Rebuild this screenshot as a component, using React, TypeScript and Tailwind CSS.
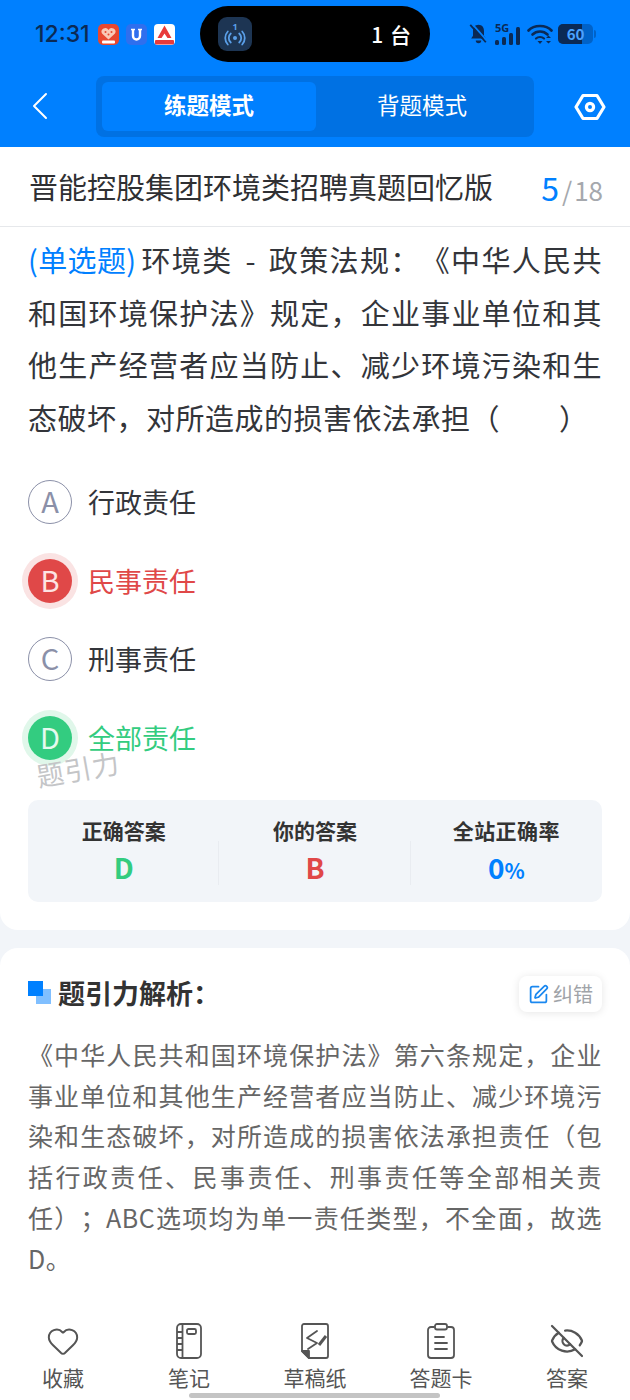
import { Heart, SquarePen, EyeOff } from "lucide-react";

const fontStack = "font-['Noto_Sans_CJK_SC','Noto_Sans',sans-serif]";

const options = [
  { key: "A", text: "行政责任", state: "idle" },
  { key: "B", text: "民事责任", state: "wrong" },
  { key: "C", text: "刑事责任", state: "idle" },
  { key: "D", text: "全部责任", state: "right" },
];

function StatusIcons() {
  return (
    <div className="flex items-center">
      {/* muted bell */}
      <svg width="21" height="22" viewBox="0 0 22 24" className="text-[#0b2a55]">
        <path d="M11 2c4 0 6 3 6 7v5l2 3H3l2-3V9c0-4 2-7 6-7z" fill="currentColor" />
        <path d="M8 19h6a3 3 0 0 1-6 0z" fill="currentColor" />
        <path d="M4 1l17 19" stroke="#0080FF" strokeWidth="2" />
        <path d="M2 2l17 19" stroke="currentColor" strokeWidth="2" />
      </svg>
      <svg width="25" height="24" viewBox="0 0 25 24" className="ml-[6px] text-[#0b2a55]">
        <text x="0" y="9.500" fontSize="11" fontWeight="700" fill="currentColor" fontFamily="Noto Sans">5G</text>
        <rect x="0" y="18" width="4" height="5" rx="1.500" fill="currentColor" />
        <rect x="7" y="15" width="4" height="8" rx="1.500" fill="currentColor" />
        <rect x="14" y="11" width="4" height="12" rx="1.500" fill="currentColor" />
        <rect x="21" y="5" width="4" height="18" rx="1.500" fill="currentColor" />
      </svg>
      <svg width="26" height="22" viewBox="0 0 26 22" className="ml-[7px] text-[#0b2a55]" fill="none" stroke="currentColor" strokeWidth="2.600" strokeLinecap="round">
        <path d="M1.500 7.500C7 1.500 19 1.500 24.500 7.500" />
        <path d="M5.500 11.500c4-4 11-4 15 0" />
        <path d="M9 15.500c2.200-2 5.800-2 8 0" strokeWidth="2.200" />
        <path d="M19 15l2.500-2.600 2.500 2.600zM19 18l2.500 2.600 2.500-2.600z" fill="currentColor" stroke="none" />
        <path d="M10.500 18h5l-2.500 3z" fill="currentColor" stroke="none" />
      </svg>
      {/* battery */}
      <div className="ml-[5px] h-[20px] w-[35px] rounded-[5px] bg-[#0062c8] relative">
        <div className="h-full w-[24px] bg-[#0b2a55] rounded-l-[5px]" />
        <span className="absolute inset-0 flex items-center justify-center text-[15px] font-semibold text-[#4aa3ff] leading-[20px]">60</span>
      </div>
      <div className="ml-px h-[8px] w-[2px] rounded-r-sm bg-[#0062c8]" />
    </div>
  );
}

function AppIcons() {
  return (
    <div className="flex items-center gap-[7px] ml-[8px]">
      <svg width="21" height="21" viewBox="0 0 21 21">
        <rect width="21" height="21" rx="5" fill="#e8472f" />
        <path d="M10.500 15.500L4 9.500a3.600 3.600 0 0 1 6.500-3.500 3.600 3.600 0 0 1 6.500 3.500z" fill="#f9c8b5" />
        <circle cx="7.500" cy="8" r="1" fill="#e8472f" />
        <circle cx="10.500" cy="10.500" r="1" fill="#e8472f" />
        <circle cx="13.500" cy="8" r="1" fill="#e8472f" />
        <rect x="4" y="16.500" width="13" height="3" rx="1" fill="#fff" />
      </svg>
      <svg width="21" height="21" viewBox="0 0 21 21">
        <rect width="21" height="21" rx="5" fill="#2f6fee" />
        <path d="M7 6v6a3.500 3.500 0 0 0 7 0V6" fill="none" stroke="#fff" strokeWidth="2.400" />
        <path d="M5 5.500h4M12 5.500h4" stroke="#fff" strokeWidth="1.500" />
      </svg>
      <svg width="21" height="21" viewBox="0 0 21 21">
        <rect width="21" height="21" rx="4" fill="#fff" />
        <path d="M10.500 1.500L3.500 14h4l3-4.500 3 4.500h4z" fill="#e83a3a" />
        <rect x="1" y="16" width="19" height="4.500" rx="1" fill="#e83a3a" />
      </svg>
    </div>
  );
}

function Island() {
  return (
    <div className="w-[230px] h-[56px] rounded-full bg-black flex items-center justify-between pl-[18px] pr-[18px]">
      <div className="w-[34px] h-[34px] rounded-[9px] bg-[#1d3553] flex items-center justify-center">
        <svg width="28" height="28" viewBox="0 0 28 28" fill="none" stroke="#5a9fe8" strokeWidth="1.800" strokeLinecap="round">
          <text x="14" y="10" textAnchor="middle" fontSize="9" fontWeight="700" fill="#5a9fe8" stroke="none" fontFamily="Noto Sans">1</text>
          <circle cx="14" cy="18" r="2" fill="#5a9fe8" stroke="none" />
          <path d="M9.800 13.500a6 6 0 0 0 0 9M18.200 13.500a6 6 0 0 1 0 9" />
          <path d="M6.800 11.500a9.500 9.500 0 0 0 0 13M21.200 11.500a9.500 9.500 0 0 1 0 13" />
        </svg>
      </div>
      <span className="text-[21px] font-medium text-white leading-none tracking-[1px]">1 台</span>
    </div>
  );
}

function Header() {
  return (
    <header className="bg-[#0080ff] h-[147px] shrink-0">
      <div className="flex items-center h-[68px] pl-[35px] pr-[34px]">
        <div className="w-[165px] flex items-center">
          <span className="text-[23px] font-medium text-[#0b2a55] leading-none font-['Inter',sans-serif]">12:31</span>
          <AppIcons />
        </div>
        <Island />
        <div className="flex-1 flex justify-end">
          <StatusIcons />
        </div>
      </div>
      <div className="flex items-center h-[61px] mt-[8px] pl-[31px] pr-[24px]">
        <svg width="18" height="28" viewBox="0 0 18 28" fill="none" stroke="#fff" strokeWidth="2" strokeLinecap="round" strokeLinejoin="round" className="-mt-[2px]">
          <path d="M15 2L3 14l12 12" />
        </svg>
        <div className="ml-[47px] w-[438px] h-[61px] rounded-[8px] bg-[#0071e3] p-[6px] flex">
          <div className="w-[214px] pb-[4px] rounded-[6px] bg-[#0080ff] flex items-center justify-center text-[22.500px] font-bold text-white">练题模式</div>
          <div className="flex-1 pb-[4px] flex items-center justify-center text-[22.500px] text-white">背题模式</div>
        </div>
        <div className="ml-auto">
          <svg width="32" height="28" viewBox="0 0 32 28" fill="none" stroke="#fff" strokeWidth="3.200" strokeLinejoin="round">
            <path d="M9 2.500h14L30 14l-7 11.500H9L2 14z" />
            <circle cx="16" cy="14" r="3.600" />
          </svg>
        </div>
      </div>
    </header>
  );
}

function Question() {
  return (
    <section className="bg-white rounded-b-[18px] h-[783px] shrink-0">
      <div className="h-[80px] border-b border-[#e6e8eb] flex items-center justify-between pl-[29px] pr-[27px]">
        <h1 className="text-[29px] text-[#2f3033] font-normal leading-none">晋能控股集团环境类招聘真题回忆版</h1>
        <div className="flex items-baseline leading-none">
          <span className="text-[32px] text-[#0080ff]">5</span>
          <span className="text-[26px] text-[#a5a8ad] ml-[3px]">/</span>
          <span className="text-[26px] text-[#a5a8ad] ml-[2px]">18</span>
        </div>
      </div>
      <p className="mt-[6px] px-[28px] text-[29px] leading-[52.600px] tracking-[0.500px] text-[#33353a] text-justify [text-spacing-trim:space-all]">
        <span className="text-[#0080ff] tracking-[-0.500px] mr-[5px]">(单选题)</span>环境类<span className="[word-spacing:5px]"> - </span>政策法规：《中华人民共和国环境保护法》规定，企业事业单位和其他生产经营者应当防止、减少环境污染和生态破坏，对所造成的损害依法承担（　　）
      </p>
      <ul className="mt-[37px] px-[28px] flex flex-col gap-[34.500px] relative">
        {options.map((o) => (
          <li key={o.key} className="flex items-center h-[44px] gap-[16px]">
            <span
              className={
                o.state === "idle"
                  ? "w-[44px] h-[44px] pb-[3px] rounded-full border border-[#8b90a8] text-[#8b90a8] flex items-center justify-center text-[29px] leading-none"
                  : o.state === "wrong"
                    ? "w-[44px] h-[44px] pb-[3px] rounded-full bg-[#e04848] ring-[6px] ring-[#fae3e3] text-[#fde3e3] flex items-center justify-center text-[29px] leading-none"
                    : "w-[44px] h-[44px] pb-[3px] rounded-full bg-[#33cc80] ring-[6px] ring-[#e0f7ea] text-[#e5faef] flex items-center justify-center text-[29px] leading-none"
              }
            >
              {o.key}
            </span>
            <span
              className={
                o.state === "idle"
                  ? "text-[27px] text-[#33353a]"
                  : o.state === "wrong"
                    ? "text-[27px] text-[#e04848]"
                    : "text-[27px] text-[#33cc80]"
              }
            >
              {o.text}
            </span>
          </li>
        ))}
        {/* watermark */}
        <span className="absolute left-[36px] bottom-[-22px] text-[27px] text-[#c4c5c7] leading-none -rotate-[10deg] tracking-[1px]">题引力</span>
      </ul>
      <div className="mx-[28px] mt-[40px] h-[102px] rounded-[10px] bg-[#f2f5f9] grid grid-cols-3">
        <div className="flex flex-col items-center pt-[15px] relative">
          <span className="text-[21px] font-bold text-[#333] leading-[30px]">正确答案</span>
          <span className="text-[28px] font-bold text-[#33cc80] leading-[44px]">D</span>
          <span className="absolute right-0 top-[41px] h-[44px] border-r border-[#e9ecf1]" />
        </div>
        <div className="flex flex-col items-center pt-[15px] relative">
          <span className="text-[21px] font-bold text-[#333] leading-[30px]">你的答案</span>
          <span className="text-[28px] font-bold text-[#e04848] leading-[44px]">B</span>
          <span className="absolute right-0 top-[41px] h-[44px] border-r border-[#e9ecf1]" />
        </div>
        <div className="flex flex-col items-center pt-[15px]">
          <span className="text-[21px] font-bold text-[#333] leading-[30px] tracking-[0.400px]">全站正确率</span>
          <span className="text-[28px] font-bold text-[#0080ff] leading-[44px]">
            0<span className="text-[21px]">%</span>
          </span>
        </div>
      </div>
    </section>
  );
}

function Analysis() {
  return (
    <section className="mt-[18px] bg-white rounded-t-[18px] flex-1 px-[28px] pt-[28px]">
      <div className="flex items-center justify-between h-[36px]">
        <div className="flex items-center -mt-[3px]">
          <span className="relative w-[23px] h-[23px]">
            <span className="absolute right-0 bottom-0 w-[15px] h-[15px] bg-[#80bfff]" />
            <span className="absolute left-0 top-0 w-[15px] h-[15px] bg-[#0080ff]" />
          </span>
          <h2 className="ml-[7px] text-[27px] font-bold text-[#333] leading-none">题引力解析：</h2>
        </div>
        <button className="w-[83px] h-[36px] rounded-[8px] bg-white shadow-[0_1px_8px_rgba(0,0,0,0.1)] flex items-center justify-center gap-[4px] text-[20px] text-[#a0a3a8]">
          <SquarePen className="w-[21px] h-[21px] text-[#1a88f0]" strokeWidth={2} />
          纠错
        </button>
      </div>
      <p className="mt-[22px] text-[25px] leading-[40.700px] tracking-[0.500px] text-[#666] text-justify [text-spacing-trim:space-all]">
        《中华人民共和国环境保护法》第六条规定，企业事业单位和其他生产经营者应当防止、减少环境污染和生态破坏，对所造成的损害依法承担责任（包括行政责任、民事责任、刑事责任等全部相关责任）；ABC选项均为单一责任类型，不全面，故选D。
      </p>
    </section>
  );
}

function NotebookIcon() {
  return (
    <svg width="28" height="38" viewBox="0 0 28 38" fill="none" stroke="#555" strokeWidth="1.800" strokeLinejoin="round">
      <rect x="2" y="2" width="24" height="34" rx="4" />
      <path d="M7.500 2v34M2 10h5M2 16h5M2 22h5M2 28h5" />
      <rect x="12" y="7" width="9" height="5" rx="1.500" />
    </svg>
  );
}

function DraftIcon() {
  return (
    <svg width="30" height="38" viewBox="0 0 30 38" fill="none" stroke="#555" strokeWidth="1.800" strokeLinejoin="round" strokeLinecap="round">
      <path d="M2 29V4a2 2 0 0 1 2-2h22a2 2 0 0 1 2 2v30a2 2 0 0 1-2 2H9z" />
      <path d="M2 29h7v7z" fill="#555" />
      <path d="M17 9l-10 7 10 5-9 6" />
      <path d="M26 14L19 23" strokeWidth="3" strokeLinecap="butt" />
    </svg>
  );
}

function ClipboardIcon() {
  return (
    <svg width="30" height="38" viewBox="0 0 30 38" fill="none" stroke="#555" strokeWidth="1.800" strokeLinecap="round" strokeLinejoin="round">
      <path d="M8 5H5a3 3 0 0 0-3 3v25a3 3 0 0 0 3 3h20a3 3 0 0 0 3-3V8a3 3 0 0 0-3-3h-3" />
      <rect x="9" y="2" width="12" height="5.500" rx="2" />
      <path d="M9 15h9M9 21h12M9 27h12" />
    </svg>
  );
}

function BottomBar() {
  const items = [
    { label: "收藏", icon: <Heart className="w-[34px] h-[34px] text-[#555]" strokeWidth={1.400} /> },
    { label: "笔记", icon: <NotebookIcon /> },
    { label: "草稿纸", icon: <DraftIcon /> },
    { label: "答题卡", icon: <ClipboardIcon /> },
    { label: "答案", icon: <EyeOff className="w-[36px] h-[36px] text-[#555]" strokeWidth={1.500} /> },
  ];
  return (
    <nav className="bg-white h-[80px] shrink-0 grid grid-cols-5 relative">
      {items.map((it) => (
        <div key={it.label} className="flex flex-col items-center">
          <div className="h-[42px] flex items-center justify-center">{it.icon}</div>
          <span className="mt-[1px] text-[21px] text-[#555] leading-[28px]">{it.label}</span>
        </div>
      ))}
      <div className="absolute left-[189px] bottom-[2px] w-[251px] h-[5px] rounded-full bg-[#c4c4c4]" />
    </nav>
  );
}

export default function App() {
  return (
    <div className={`w-[630px] h-[1400px] overflow-hidden flex flex-col bg-[#f2f5f9] ${fontStack}`}>
      <Header />
      <Question />
      <Analysis />
      <BottomBar />
    </div>
  );
}
